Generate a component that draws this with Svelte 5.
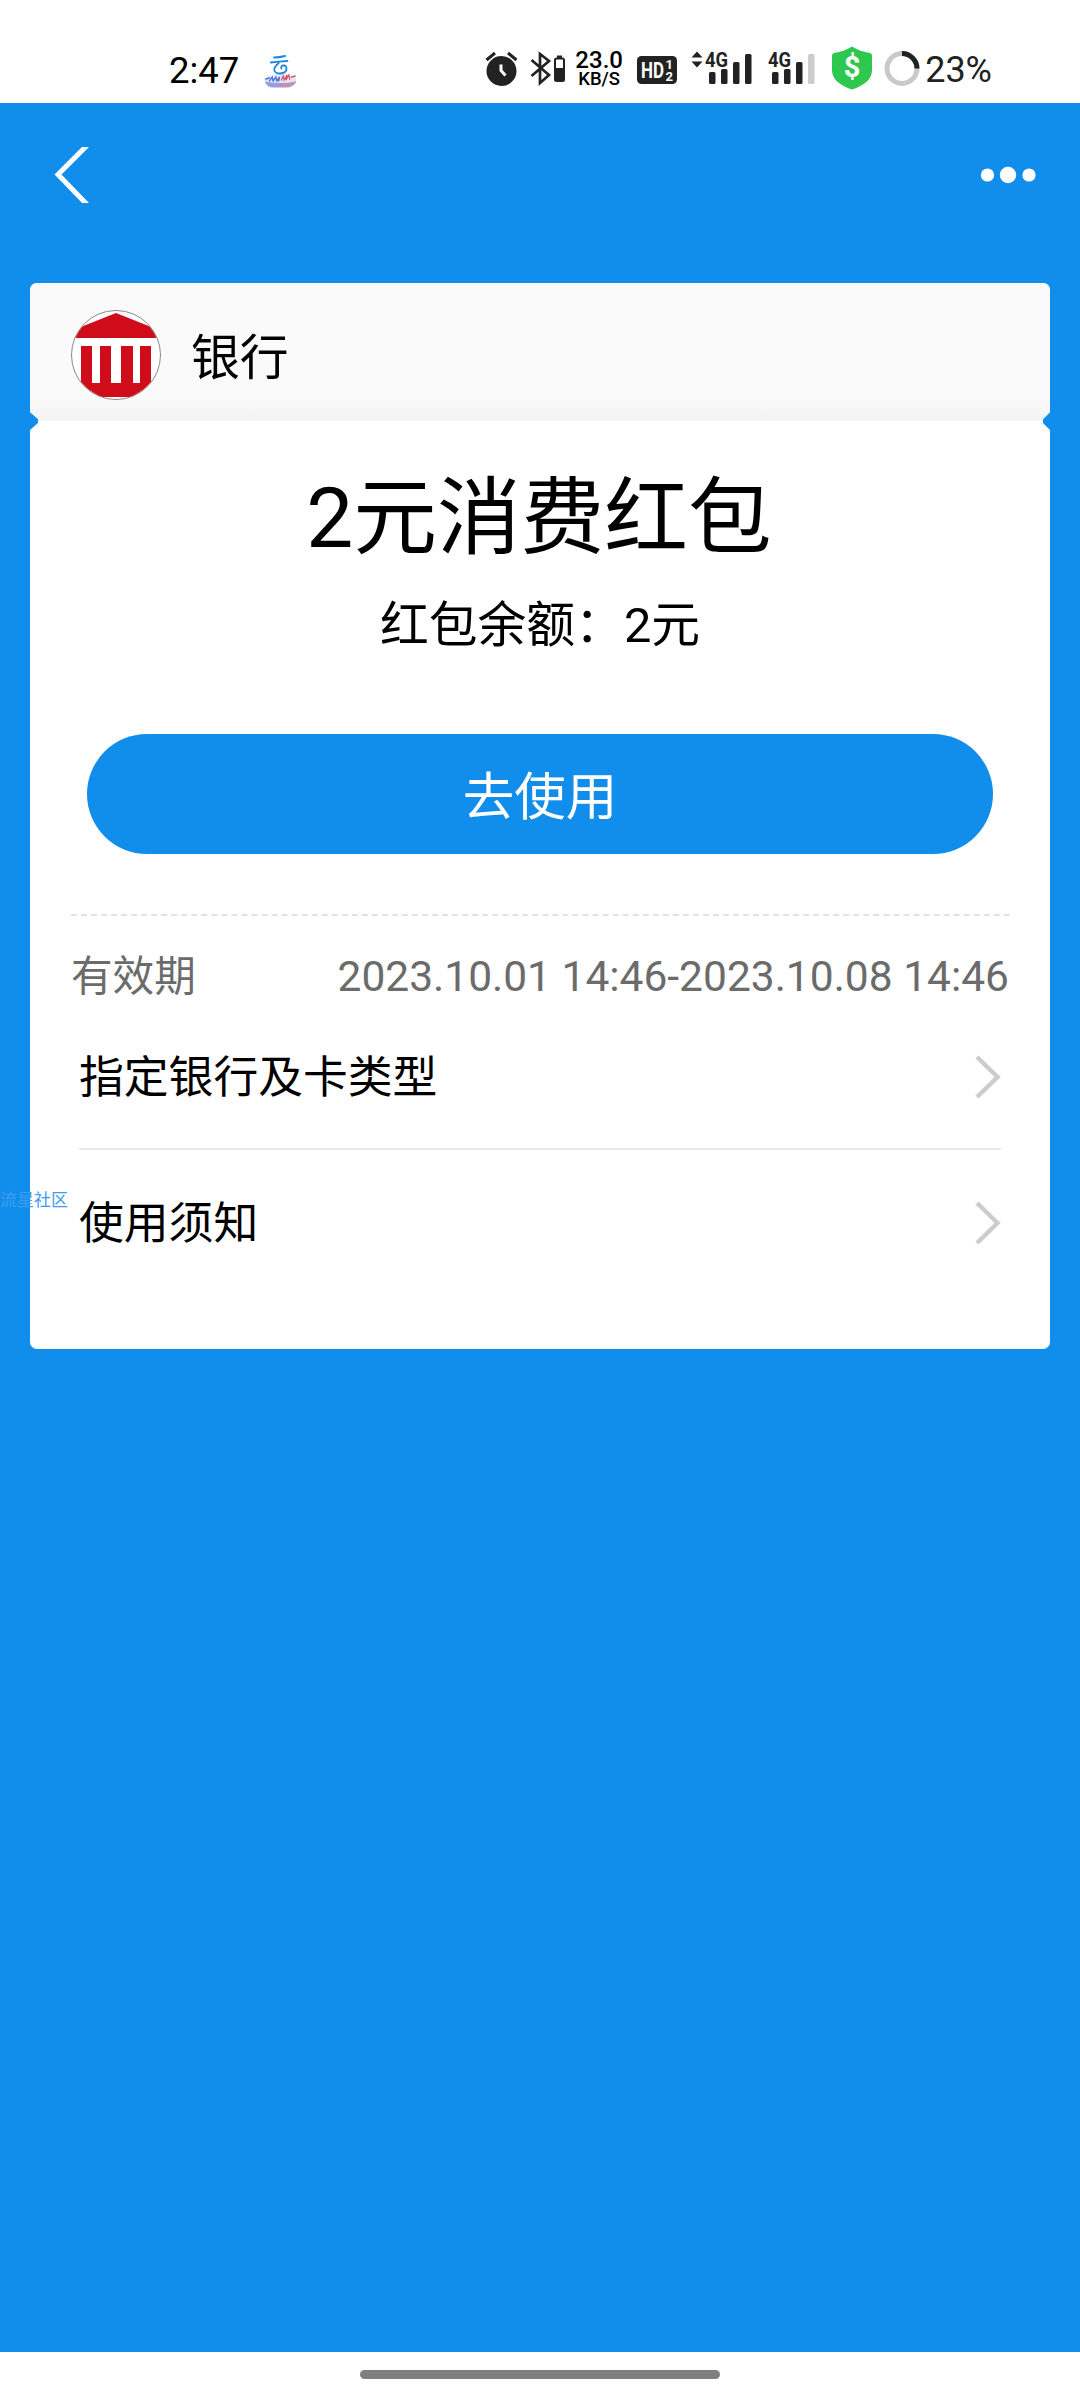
<script lang="ts">
  const rows = ['指定银行及卡类型', '使用须知'];

  // x, y, height of each signal bar; the last one of the second SIM is off
  const simBars = [
    { x: 4, y: 26, h: 12 },
    { x: 16, y: 23, h: 15 },
    { x: 28, y: 16, h: 22 },
    { x: 40, y: 8, h: 30 }
  ];
</script>

<div class="screen">
  <header class="status">
    <span class="time">2:47</span>
    <svg class="cloud" width="35" height="34" viewBox="0 0 38 34" preserveAspectRatio="none">
      <ellipse cx="19" cy="26" rx="17.500" ry="6" fill="#e6e4f5" />
      <path d="M2 27.500q17 3 34 0q-3 6-11 6H12q-8 0-10-6z" fill="#9a9be0" />
      <path d="M20 29q9 1 16-1.500q-2 5-10 5.500h-6z" fill="#c98fb0" />
      <g fill="none" stroke-linecap="round">
        <path d="M12 3.500q6 0 12-1.500M8.500 8.500q8-1 18-1.500" stroke="#1f86e0" stroke-width="2" />
        <path d="M17 9q-6 5-4.500 8q1 2.500 6 2.500q7-.5 7-4.500t-3.500-3.500q-3 .5-2 3" stroke="#1f86e0" stroke-width="2" />
        <path d="M3 25l4-1M7 27l3-4 1 4 3-4 1 4 3-4-1 4" stroke="#4a6fd6" stroke-width="1.400" />
        <path d="M20 26l2-4 1 4 3-5-1 5 3-5 1 4M31 23l4-1" stroke="#d0566b" stroke-width="1.400" />
      </g>
    </svg>

    <div class="tray">
      <svg class="alarm" width="33" height="40" viewBox="0 0 33 40">
        <circle cx="16.500" cy="25" r="15" fill="#222" />
        <path d="M1.500 14l8.500-7M31.500 14l-8.500-7" stroke="#222" stroke-width="3" />
        <path d="M16 18.500v6l4.500 5" fill="none" stroke="#fff" stroke-width="3" />
      </svg>
      <svg class="bluetooth" width="36" height="40" viewBox="0 0 36 40">
        <path d="M1.500 14l17.500 15-9 8V8l9 7L1.500 30" fill="none" stroke="#222" stroke-width="2.700" />
        <rect x="25" y="12.500" width="9" height="22.500" rx="1.500" fill="none" stroke="#222" stroke-width="2" />
        <rect x="25" y="22" width="9" height="13" fill="#222" />
        <rect x="27" y="9.500" width="5" height="3" fill="#222" />
      </svg>
      <div class="speed">
        <span class="rate">23.0</span>
        <span class="unit">KB/S</span>
      </div>
      <svg class="volte" width="40" height="40" viewBox="0 0 40 40">
        <rect y="10" width="40" height="28" rx="4.500" fill="#222" />
        <text class="hd" x="4" y="31.500" textLength="23" lengthAdjust="spacingAndGlyphs">HD</text>
        <text class="sim" x="28.500" y="22.500">1</text>
        <text class="sim" x="28.500" y="34.500">2</text>
      </svg>
      <svg class="signal" width="62" height="40" viewBox="-14 0 62 40">
        <path d="M-13.500 11.500l5.500-6 5.500 6zM-13.500 15.500l5.500 6 5.500-6z" fill="#222" />
        {#each simBars as b (b.x)}
          <rect x={b.x} y={b.y} width="6.500" height={b.h} rx="1.500" fill="#222" />
        {/each}
        <text class="net" x="0" y="21" textLength="23" lengthAdjust="spacingAndGlyphs">4G</text>
      </svg>
      <svg class="signal" width="48" height="40" viewBox="0 0 48 40">
        {#each simBars as b, i (b.x)}
          <rect x={b.x} y={b.y} width="6.500" height={b.h} rx="1.500" fill={i === 3 ? '#ccc' : '#222'} />
        {/each}
        <text class="net" x="0" y="21" textLength="23" lengthAdjust="spacingAndGlyphs">4G</text>
      </svg>
      <svg class="shield" width="40" height="44" viewBox="0 0 40 44">
        <path d="M20 .5q8 5 18 6.500q2 .5 2 2.500v15q0 6-5 11q-6 5-15 8q-9-3-15-8q-5-5-5-11v-15q0-2 2-2.500Q12 5.500 20 .5z" fill="#2dc84d" />
        <text class="dollar" x="20" y="31" text-anchor="middle">$</text>
      </svg>
      <svg class="ring" width="36" height="40" viewBox="0 0 36 40">
        <circle cx="18" cy="22.500" r="15" fill="none" stroke="#c9c9c9" stroke-width="5" />
        <path d="M18 7.500a15 15 0 0 1 15 15" fill="none" stroke="#222" stroke-width="5" />
      </svg>
      <span class="percent">23%</span>
    </div>
  </header>

  <main>
    <nav>
      <svg width="36" height="56" viewBox="0 0 36 56">
        <path d="M34.500 -2L5 27.500L34.500 58" fill="none" stroke="#fff" stroke-width="5" />
      </svg>
      <svg width="56" height="18" viewBox="0 0 56 18" fill="#fff">
        <circle cx="7.500" cy="9" r="6.600" />
        <circle cx="28" cy="9" r="8.200" />
        <circle cx="49" cy="9" r="6.600" />
      </svg>
    </nav>

    <section class="coupon">
      <div class="issuer">
        <svg width="90" height="90" viewBox="0 0 90 90">
          <defs>
            <clipPath id="disc"><circle cx="45" cy="45" r="44" /></clipPath>
          </defs>
          <circle cx="45" cy="45" r="44.500" fill="#fff" stroke="#888" />
          <g clip-path="url(#disc)" fill="#d00c1b">
            <path d="M45 3L90 21V28H0V21z" />
            <path d="M10 36h11v37h8V36h11v37h10V36h12v37h7V36h11v51H10z" />
          </g>
        </svg>
        <span>银行</span>
      </div>

      <div class="body">
        <h1>2元消费红包</h1>
        <p class="balance">红包余额：2元</p>
        <button><span>去使用</span></button>
        <svg class="dashes" width="939" height="2" viewBox="0 0 939 2">
          <path d="M0 1H939" stroke="#e2e2e2" stroke-width="2" stroke-dasharray="6 4.030" />
        </svg>
        <div class="validity">
          <span>有效期</span>
          <span class="dates">2023.10.01 14:46-2023.10.08 14:46</span>
        </div>
        <ul>
          {#each rows as row (row)}
            <li>
              <span>{row}</span>
              <svg width="26" height="44" viewBox="0 0 26 44">
                <path d="M2 2L22.500 22L2 42" fill="none" stroke="#ccc" stroke-width="4.500" />
              </svg>
            </li>
          {/each}
        </ul>
      </div>
    </section>
    <span class="mark">流星社区</span>
  </main>

  <footer><i></i></footer>
</div>

<style>
  :global(body) {
    background: #fff;
  }
  .screen {
    width: 1080px;
    height: 2400px;
    display: flex;
    flex-direction: column;
    overflow: hidden;
    font-family: Roboto, 'Noto Sans CJK SC', sans-serif;
    color: #000;
  }
  svg {
    display: block;
    flex: none;
  }

  .status {
    height: 103px;
    box-sizing: border-box;
    padding: 46px 88px 0 169px;
    display: flex;
    align-items: flex-start;
    flex: none;
    white-space: nowrap;
  }
  .time,
  .percent {
    font-size: 36px;
    line-height: 49px;
    font-weight: 450;
  }
  .time {
    width: 70px;
    font-size: 36.500px;
  }
  .cloud {
    margin: 8px 0 0 24px;
  }
  .tray {
    display: flex;
    align-items: flex-start;
    margin-left: auto;
    color: #222;
  }
  .alarm {
    margin-right: 12px;
  }
  .bluetooth {
    margin-right: 8px;
  }
  .speed {
    display: flex;
    flex: none;
    flex-direction: column;
    align-items: center;
    width: 50px;
    margin: 4px 13px 0 0;
    color: #000;
    font-weight: 500;
  }
  .rate {
    font-size: 24px;
    line-height: 20px;
  }
  .unit {
    font-size: 18.500px;
    line-height: 18px;
  }
  .volte {
    margin-right: 14px;
  }
  .signal {
    margin-right: 15px;
  }
  .signal + .signal {
    margin-right: 16px;
  }
  .shield {
    margin-right: 12px;
  }
  .ring {
    margin-right: 5px;
  }
  .hd {
    font-size: 22px;
    font-weight: 700;
    fill: #fff;
  }
  .sim {
    font-size: 13px;
    font-weight: 700;
    fill: #fff;
  }
  .net {
    font-size: 20px;
    font-weight: 700;
    fill: #222;
    stroke: #fff;
    stroke-width: 2px;
    paint-order: stroke;
  }
  .dollar {
    font-size: 29px;
    font-weight: 700;
    fill: #fff;
  }

  main {
    position: relative;
    height: 2249px;
    background: #118eeb;
  }
  nav {
    height: 180px;
    box-sizing: border-box;
    padding: 44px 44px 0 53px;
    display: flex;
    justify-content: space-between;
  }
  nav svg:last-child {
    margin-top: 19px;
  }
  .coupon {
    margin: 0 30px;
    height: 1066px;
    background: #fff;
    border-radius: 7px;
    clip-path: polygon(
      0 0, 100% 0, 100% 129px, 1013px 136px, 1013px 140px, 100% 147px,
      100% 100%, 0 100%, 0 147px, 8px 140px, 8px 136px, 0 129px
    );
  }
  .issuer {
    height: 138px;
    box-sizing: border-box;
    padding: 27px 41px 0;
    display: flex;
    gap: 30px;
    border-radius: 7px 7px 0 0;
    background: linear-gradient(#fafafa 84%, #f3f3f3);
    font-size: 48.800px;
    line-height: 98px;
  }
  .body {
    padding: 47px 41px 0;
  }
  h1 {
    margin: 0;
    font-size: 83.700px;
    line-height: 100px;
    font-weight: 400;
    text-align: center;
    text-indent: -2px;
  }
  .balance {
    margin: 28px 0 0;
    font-size: 48.800px;
    line-height: 60px;
    text-align: center;
  }
  button {
    display: block;
    width: 906px;
    height: 120px;
    margin: 78px 0 0 16px;
    padding: 7px 0 0;
    border: 0;
    border-radius: 60px;
    background: #118eeb;
    color: #fff;
    font: inherit;
    font-size: 51.500px;
    line-height: 113px;
  }
  .dashes {
    margin-top: 60px;
  }
  .validity {
    display: flex;
    justify-content: space-between;
    margin-top: 31px;
    font-size: 41.600px;
    line-height: 60px;
    color: #6b6b6b;
    white-space: nowrap;
  }
  .dates {
    font-size: 42.500px;
  }
  ul {
    margin: 0;
    padding: 0 8px;
    list-style: none;
  }
  li {
    display: flex;
    align-items: center;
    justify-content: space-between;
    height: 147px;
    box-sizing: border-box;
    font-size: 44.800px;
  }
  li:first-child {
    height: 143px;
    border-bottom: 2px solid #e9e9e9;
  }
  li span {
    line-height: 60px;
  }
  li svg {
    margin-bottom: 2px;
  }
  .mark {
    position: absolute;
    left: 0;
    top: 1085px;
    font-size: 17px;
    line-height: 24px;
    color: #3d9cf0;
  }

  footer {
    flex: 1;
    display: flex;
    justify-content: center;
    padding-top: 18px;
    background: #fff;
  }
  footer i {
    width: 360px;
    height: 9px;
    border-radius: 5px;
    background: #7f7f7f;
  }
</style>
